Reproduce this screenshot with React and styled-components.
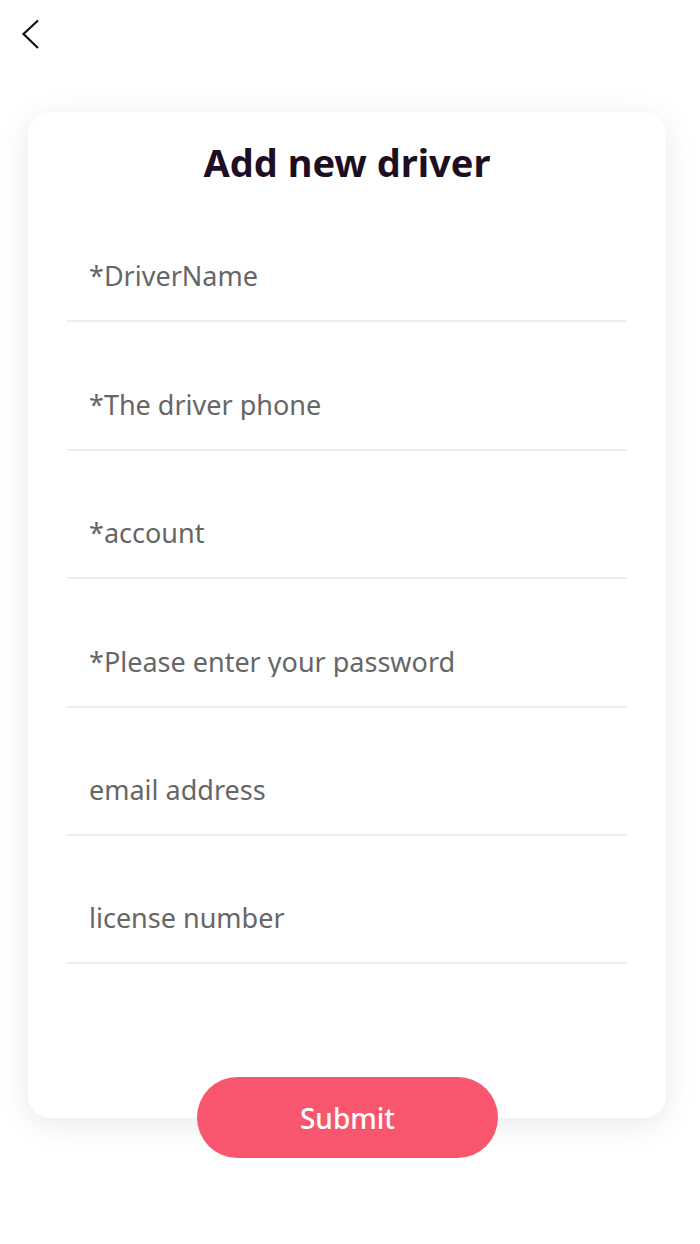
import React from 'react';
import styled, { createGlobalStyle } from 'styled-components';

const GlobalStyle = createGlobalStyle`
  body {
    margin: 0;
    background: #ffffff;
    font-family: "Noto Sans", "Open Sans", sans-serif;
  }
`;

// Halaman utama
const Page = styled.div`
  width: 700px;
  min-height: 1244px;
  background: #ffffff;
`;

// Bar atas dengan tombol kembali
const TopBar = styled.div`
  height: 112px;
  box-sizing: border-box;
  padding: 19px 0 0 21px;
`;

const BackButton = styled.button`
  border: none;
  background: none;
  padding: 0;
  width: 20px;
  height: 32px;
  cursor: pointer;
  display: block;
`;

// Kartu form
const Card = styled.div`
  width: 638px;
  margin-left: 28px;
  box-sizing: border-box;
  background: #ffffff;
  border-radius: 22px;
  box-shadow: 0 6px 30px rgba(0, 0, 0, 0.09);
  padding: 30px 39px 154px;
`;

const Title = styled.h1`
  margin: 0 0 12px;
  font-size: 38px;
  line-height: 40px;
  font-weight: 700;
  text-align: center;
  color: #1f0d22;
`;

const Field = styled.div`
  height: 128.4px;
  box-sizing: border-box;
  display: flex;
  align-items: flex-end;
  padding: 0 0 29px 22px;
  border-bottom: 2px solid #edecf3;
`;

const Input = styled.input`
  width: 100%;
  border: none;
  outline: none;
  padding: 0;
  background: transparent;
  font-family: inherit;
  font-size: 27px;
  line-height: 30px;
  height: 30px;
  color: #333;

  &::placeholder {
    color: #666666;
  }
`;

const SubmitButton = styled.button`
  display: block;
  width: 301px;
  height: 81px;
  margin: -41px 0 0 197px;
  border: none;
  border-radius: 41px;
  background: #f7566e;
  color: #ffffff;
  font-family: inherit;
  font-size: 28px;
  font-weight: 500;
  cursor: pointer;
`;

const fields = [
  { name: 'driverName', placeholder: '*DriverName' },
  { name: 'phone', placeholder: '*The driver phone' },
  { name: 'account', placeholder: '*account' },
  { name: 'password', placeholder: '*Please enter your password', type: 'password' },
  { name: 'email', placeholder: 'email address' },
  { name: 'license', placeholder: 'license number' },
];

const App = () => {
  return (
    <Page>
      <GlobalStyle />
      <TopBar>
        <BackButton aria-label="Back">
          <svg width="20" height="32" viewBox="0 0 20 32">
            <path d="M17 1.5 L2.5 15 L17 29" fill="none" stroke="#111" strokeWidth="2.2" />
          </svg>
        </BackButton>
      </TopBar>
      <Card>
        <Title>Add new driver</Title>
        {fields.map((f) => (
          <Field key={f.name}>
            <Input type={f.type || 'text'} name={f.name} placeholder={f.placeholder} />
          </Field>
        ))}
      </Card>
      <SubmitButton>Submit</SubmitButton>
    </Page>
  );
};

export default App;
